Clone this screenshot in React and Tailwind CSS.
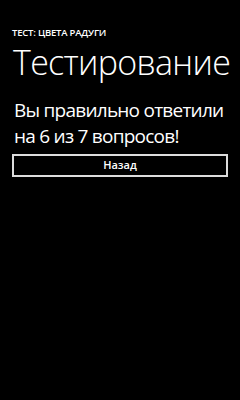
export default function App() {
  return (
    <div
      className="w-[240px] h-[400px] bg-black text-white overflow-hidden"
      style={{ fontFamily: '"Open Sans", "Noto Sans", sans-serif' }}
    >
      <div className="pt-[27px] pl-[12px]">
        <div className="text-[9.5px] leading-[12px] font-semibold tracking-[-0.2px]">
          ТЕСТ: ЦВЕТА РАДУГИ
        </div>
        <h1 className="mt-[3px] pl-[1px] text-[34px] leading-[40px] font-light tracking-[-0.7px]">
          Тестирование
        </h1>
      </div>
      <div className="px-[12px] pt-[15px]">
        <p className="pl-[2px] text-[19px] leading-[26px] tracking-[-0.75px] w-[216px]">
          Вы правильно ответили на 6 из 7 вопросов!
        </p>
        <button className="mt-[5px] w-[216px] h-[23px] border-2 border-[#dcdcdc] flex items-center justify-center text-[11px] font-semibold">
          Назад
        </button>
      </div>
    </div>
  )
}
